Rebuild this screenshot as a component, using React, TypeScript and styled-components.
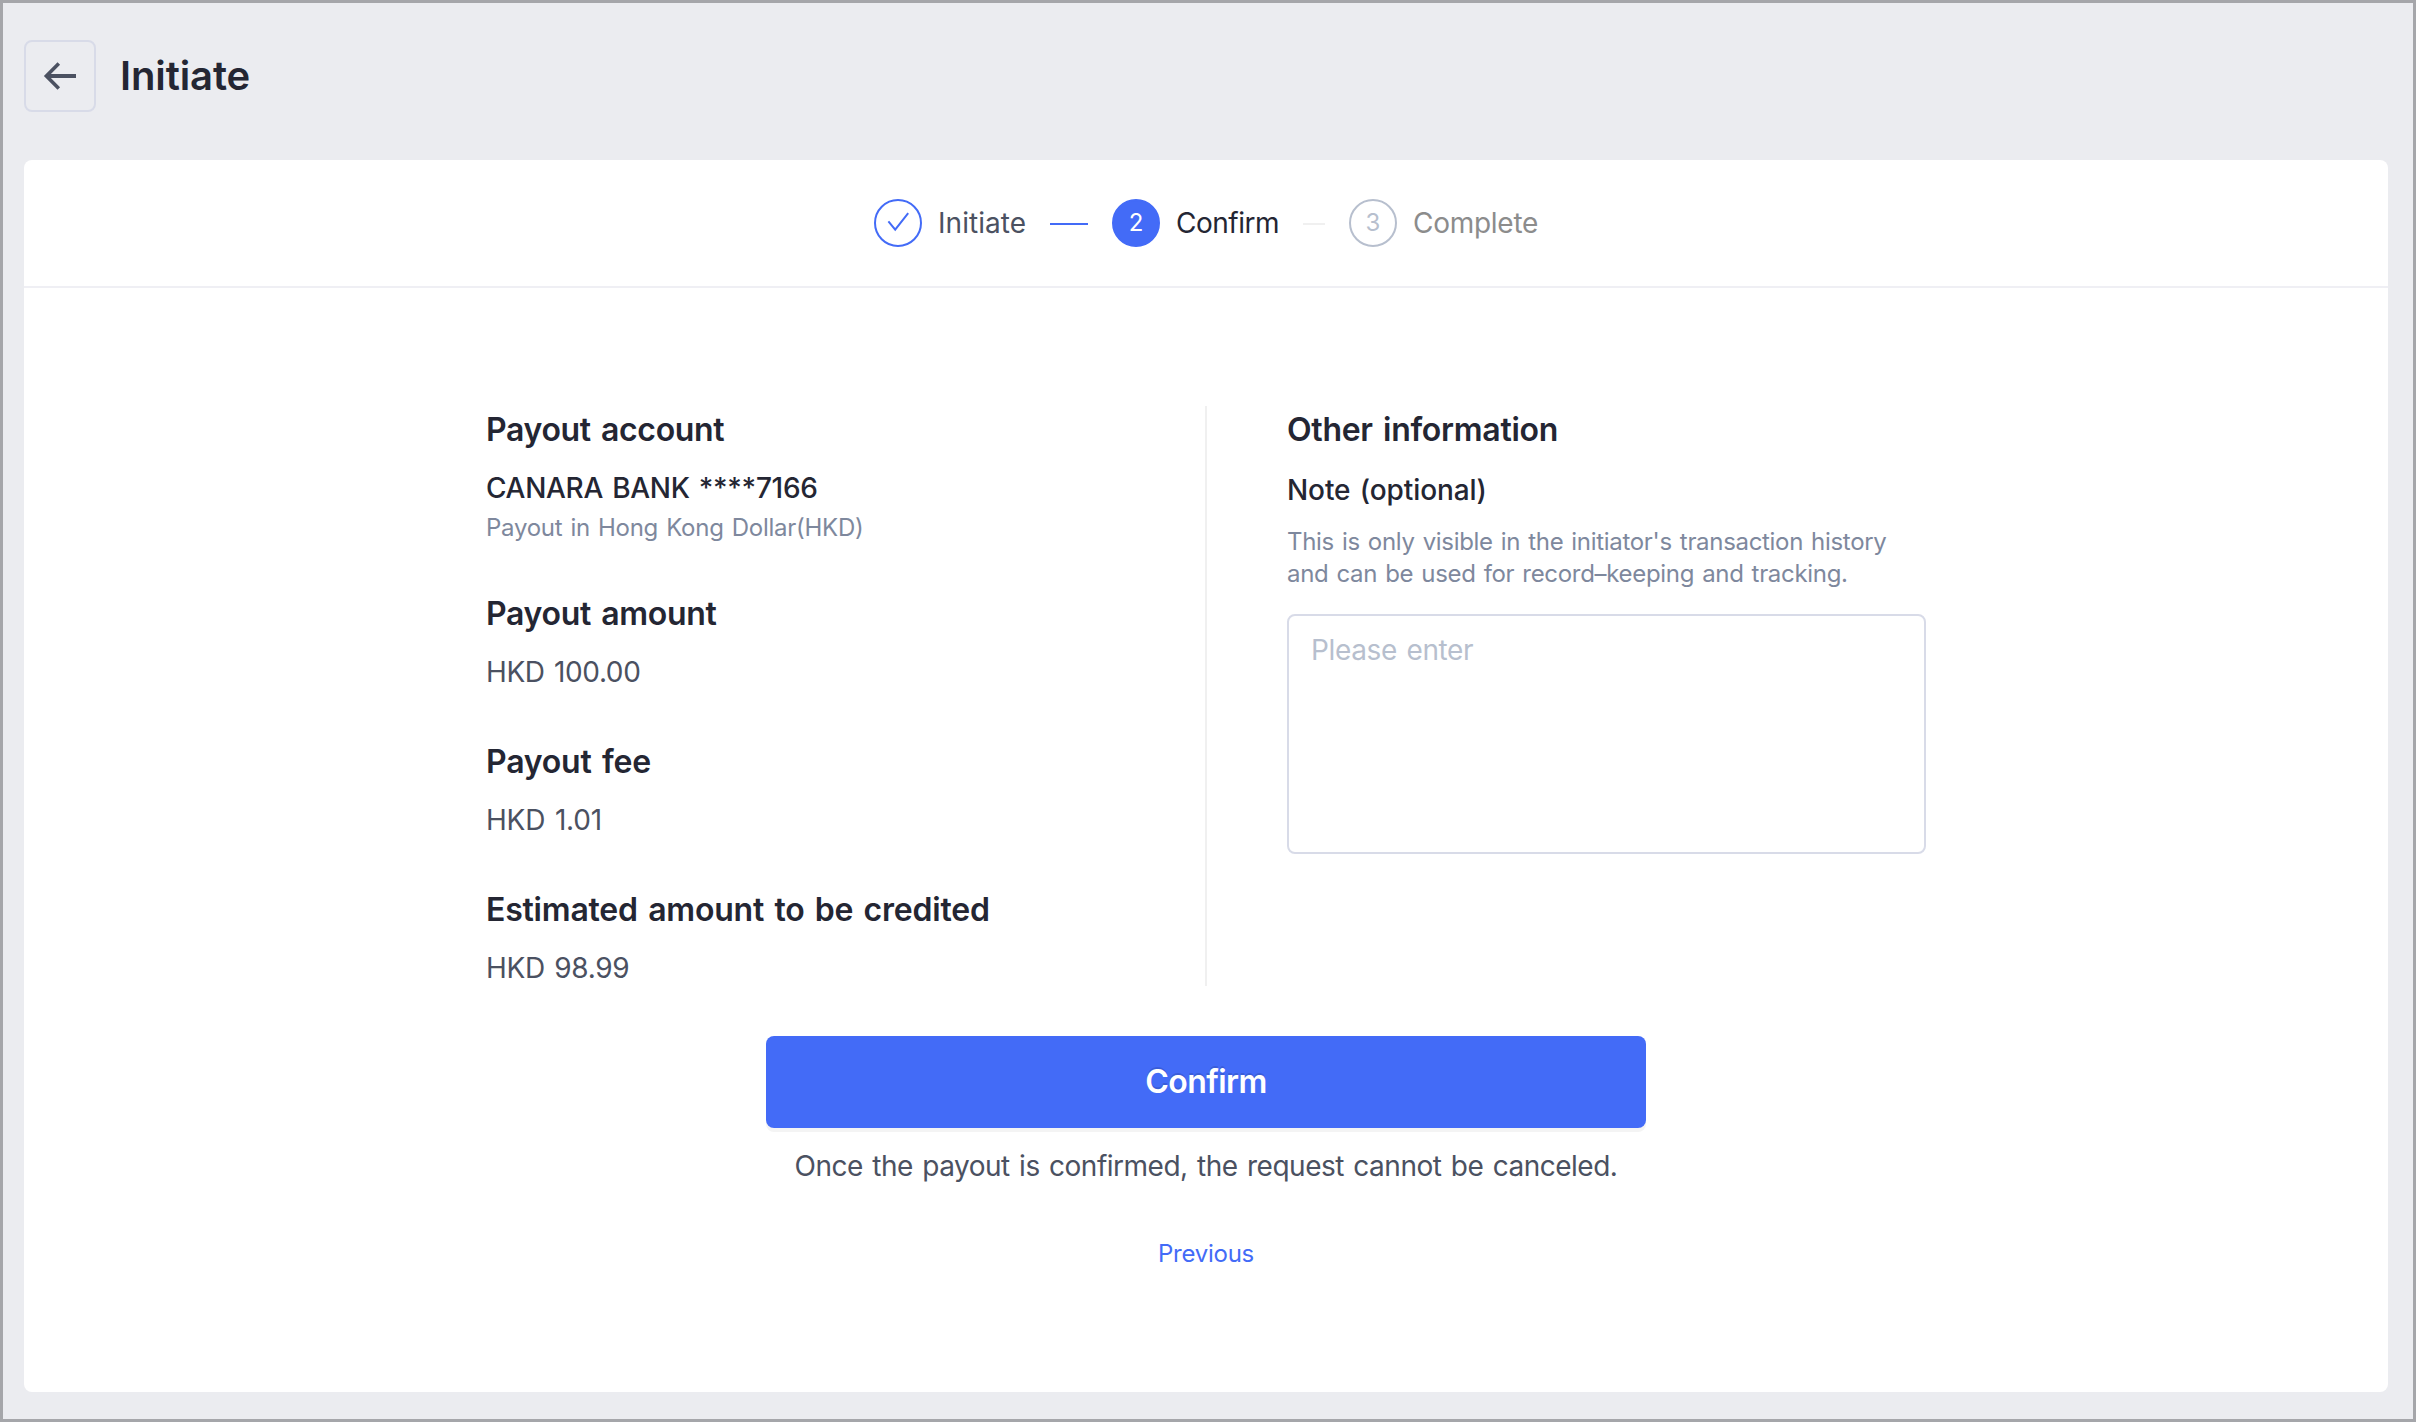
import React from "react";
import styled, { createGlobalStyle } from "styled-components";

const color = {
  ink: "#242633",
  text: "#4b5161",
  muted: "#7e889d",
  faint: "#b7bfce",
  inactive: "#8c8c8c",
  border: "#d8dbe8",
  rule: "#efeff4",
  line: "#f0f0f0",
  blue: "#436bf7",
  page: "#ebecf0",
};

const GlobalStyle = createGlobalStyle`
  *, *::before, *::after { box-sizing: border-box; }
  body { margin: 0; }
`;

const Page = styled.div`
  width: 2416px;
  height: 1422px;
  padding: 37px 25px 27px 21px;
  border: 3px solid #a5a6aa;
  background: ${color.page};
  color: ${color.ink};
  font-family: Inter, "Liberation Sans", sans-serif;
  display: flex;
  flex-direction: column;
  gap: 48px;
`;

const Header = styled.header`
  display: flex;
  align-items: center;
  gap: 24px;
  height: 72px;
`;

const BackButton = styled.button`
  display: flex;
  width: 72px;
  height: 72px;
  padding: 0;
  border: 2px solid ${color.border};
  border-radius: 8px;
  background: transparent;
  color: ${color.text};
`;

const Title = styled.h1`
  margin: 0;
  font-size: 40px;
  line-height: 48px;
  font-weight: 600;
  letter-spacing: -0.1px;
`;

const Card = styled.main`
  flex: 1;
  display: flex;
  flex-direction: column;
  align-items: center;
  border-radius: 8px;
  background: #fff;
`;

const StepBar = styled.nav`
  align-self: stretch;
  display: flex;
  justify-content: center;
  height: 128px;
  padding-top: 39px;
  border-bottom: 2px solid ${color.rule};
`;

const Steps = styled.ol`
  display: grid;
  grid-template-columns: 238px 237px 189px;
  height: 48px;
  margin: 0;
  padding: 0;
  list-style: none;
`;

type StepState = "done" | "active" | "waiting";

const circleColor = { done: color.blue, active: color.blue, waiting: color.faint };
const labelColor = { done: color.text, active: color.ink, waiting: color.inactive };

const Step = styled.li`
  display: flex;
  align-items: center;
`;

const StepCircle = styled.span<{ $state: StepState }>`
  flex: none;
  display: flex;
  align-items: center;
  justify-content: center;
  width: 48px;
  height: 48px;
  margin-right: 16px;
  border: 2px solid ${(p) => circleColor[p.$state]};
  border-radius: 50%;
  background: ${(p) => (p.$state === "active" ? color.blue : "#fff")};
  color: ${(p) => (p.$state === "active" ? "#fff" : circleColor[p.$state])};
  font-size: 24px;
  line-height: 44px;
`;

const StepLabel = styled.span<{ $state: StepState; $track: number }>`
  color: ${(p) => labelColor[p.$state]};
  font-size: 28px;
  line-height: 48px;
  letter-spacing: ${(p) => p.$track}px;
  white-space: nowrap;
`;

const StepLine = styled.span<{ $done?: boolean }>`
  flex: 1;
  height: 2px;
  margin: 2px 24px 0;
  background: ${(p) => (p.$done ? color.blue : color.line)};
`;

const Columns = styled.div`
  display: grid;
  grid-template-columns: 721px 719px;
  width: 1440px;
  height: 580px;
  margin-top: 118px;
`;

const Summary = styled.section`
  display: flex;
  flex-direction: column;
  gap: 48px;
  border-right: 2px solid ${color.line};
`;

const Extra = styled.section`
  padding-left: 80px;
`;

const Heading = styled.h2<{ $track?: number }>`
  margin: 0;
  font-size: 32px;
  line-height: 48px;
  font-weight: 600;
  word-spacing: 2.5px;
  letter-spacing: ${(p) => p.$track ?? 0}px;
`;

const Value = styled.p<{ $strong?: boolean; $track?: number }>`
  margin: 16px 0 0;
  color: ${(p) => (p.$strong ? color.ink : color.text)};
  font-size: 28px;
  line-height: 36px;
  font-weight: ${(p) => (p.$strong ? 500 : 400)};
  word-spacing: 2px;
  letter-spacing: ${(p) => p.$track ?? 0}px;
`;

const SubValue = styled.p`
  margin: 6px 0 0;
  padding-top: 1px;
  color: ${color.muted};
  font-size: 24px;
  line-height: 29px;
  word-spacing: 1.6px;
  letter-spacing: -0.26px;
`;

const NoteLabel = styled.label`
  display: block;
  margin-top: 18px;
  font-size: 28px;
  line-height: 36px;
  font-weight: 500;
  word-spacing: 2px;
  letter-spacing: -0.1px;
`;

const NoteHint = styled.p`
  margin: 18px 0 0;
  color: ${color.muted};
  font-size: 24px;
  line-height: 32px;
  word-spacing: 1.6px;
  letter-spacing: -0.31px;
`;

const NoteField = styled.textarea`
  display: block;
  width: 639px;
  height: 240px;
  margin-top: 24px;
  padding: 16px 22px;
  border: 2px solid ${color.border};
  border-radius: 8px;
  background: #fff;
  color: ${color.ink};
  font: inherit;
  font-size: 28px;
  line-height: 36px;
  word-spacing: 2px;
  letter-spacing: -0.36px;
  resize: none;
  outline: none;

  &::placeholder {
    color: ${color.faint};
    opacity: 1;
  }
`;

const ConfirmButton = styled.button`
  width: 880px;
  height: 92px;
  margin-top: 50px;
  padding: 0;
  border: 0;
  border-radius: 8px;
  background: ${color.blue};
  box-shadow: 0 4px 0 #f4f4f4;
  color: #fff;
  font: inherit;
  font-size: 32px;
  line-height: 92px;
  font-weight: 600;
  letter-spacing: -0.58px;
  text-shadow: 0 -2px 0 rgba(0, 0, 0, 0.12);
`;

const Warning = styled.p`
  margin: 20px 0 0;
  color: ${color.text};
  font-size: 28px;
  line-height: 36px;
  word-spacing: 2px;
  letter-spacing: -0.49px;
`;

const PreviousLink = styled.button`
  margin-top: 54px;
  padding: 0;
  border: 0;
  background: none;
  color: ${color.blue};
  font: inherit;
  font-size: 24px;
  line-height: 32px;
  letter-spacing: -0.25px;
`;

const BackIcon = () => (
  <svg width="68" height="68" viewBox="0 0 68 68" fill="none" stroke="currentColor">
    <path d="M32.8 21.6 20.4 34l12.4 12.4" strokeWidth="3.6" />
    <path d="M20.4 34H50" strokeWidth="4" />
  </svg>
);

const CheckIcon = () => (
  <svg width="44" height="44" viewBox="0 0 44 44" fill="none" stroke="currentColor">
    <path d="M12.4 20.4 19.2 28.6 32.2 12.2" strokeWidth="2" />
  </svg>
);

const amounts = [
  { label: "Payout amount", value: "HKD 100.00", headTrack: -0.3, valueTrack: -0.4 },
  { label: "Payout fee", value: "HKD 1.01", headTrack: -0.2, valueTrack: -0.2 },
  { label: "Estimated amount to be credited", value: "HKD 98.99", headTrack: -0.21, valueTrack: -0.35 },
];

export default function App() {
  return (
    <>
      <GlobalStyle />
      <Page>
        <Header>
          <BackButton aria-label="Back">
            <BackIcon />
          </BackButton>
          <Title>Initiate</Title>
        </Header>
        <Card>
          <StepBar>
            <Steps>
              <Step>
                <StepCircle $state="done">
                  <CheckIcon />
                </StepCircle>
                <StepLabel $state="done" $track={0.05}>Initiate</StepLabel>
                <StepLine $done />
              </Step>
              <Step>
                <StepCircle $state="active">2</StepCircle>
                <StepLabel $state="active" $track={-0.5}>Confirm</StepLabel>
                <StepLine />
              </Step>
              <Step>
                <StepCircle $state="waiting">3</StepCircle>
                <StepLabel $state="waiting" $track={-0.27}>Complete</StepLabel>
              </Step>
            </Steps>
          </StepBar>
          <Columns>
            <Summary>
              <div>
                <Heading $track={-0.34}>Payout account</Heading>
                <Value $strong $track={-0.3}>CANARA BANK ****7166</Value>
                <SubValue>Payout in Hong Kong Dollar(HKD)</SubValue>
              </div>
              {amounts.map((a) => (
                <div key={a.label}>
                  <Heading $track={a.headTrack}>{a.label}</Heading>
                  <Value $track={a.valueTrack}>{a.value}</Value>
                </div>
              ))}
            </Summary>
            <Extra>
              <Heading $track={-0.28}>Other information</Heading>
              <NoteLabel htmlFor="note">Note (optional)</NoteLabel>
              <NoteHint>
                This is only visible in the initiator's transaction history and can be used for record–keeping and tracking.
              </NoteHint>
              <NoteField id="note" placeholder="Please enter" />
            </Extra>
          </Columns>
          <ConfirmButton>Confirm</ConfirmButton>
          <Warning>Once the payout is confirmed, the request cannot be canceled.</Warning>
          <PreviousLink>Previous</PreviousLink>
        </Card>
      </Page>
    </>
  );
}
